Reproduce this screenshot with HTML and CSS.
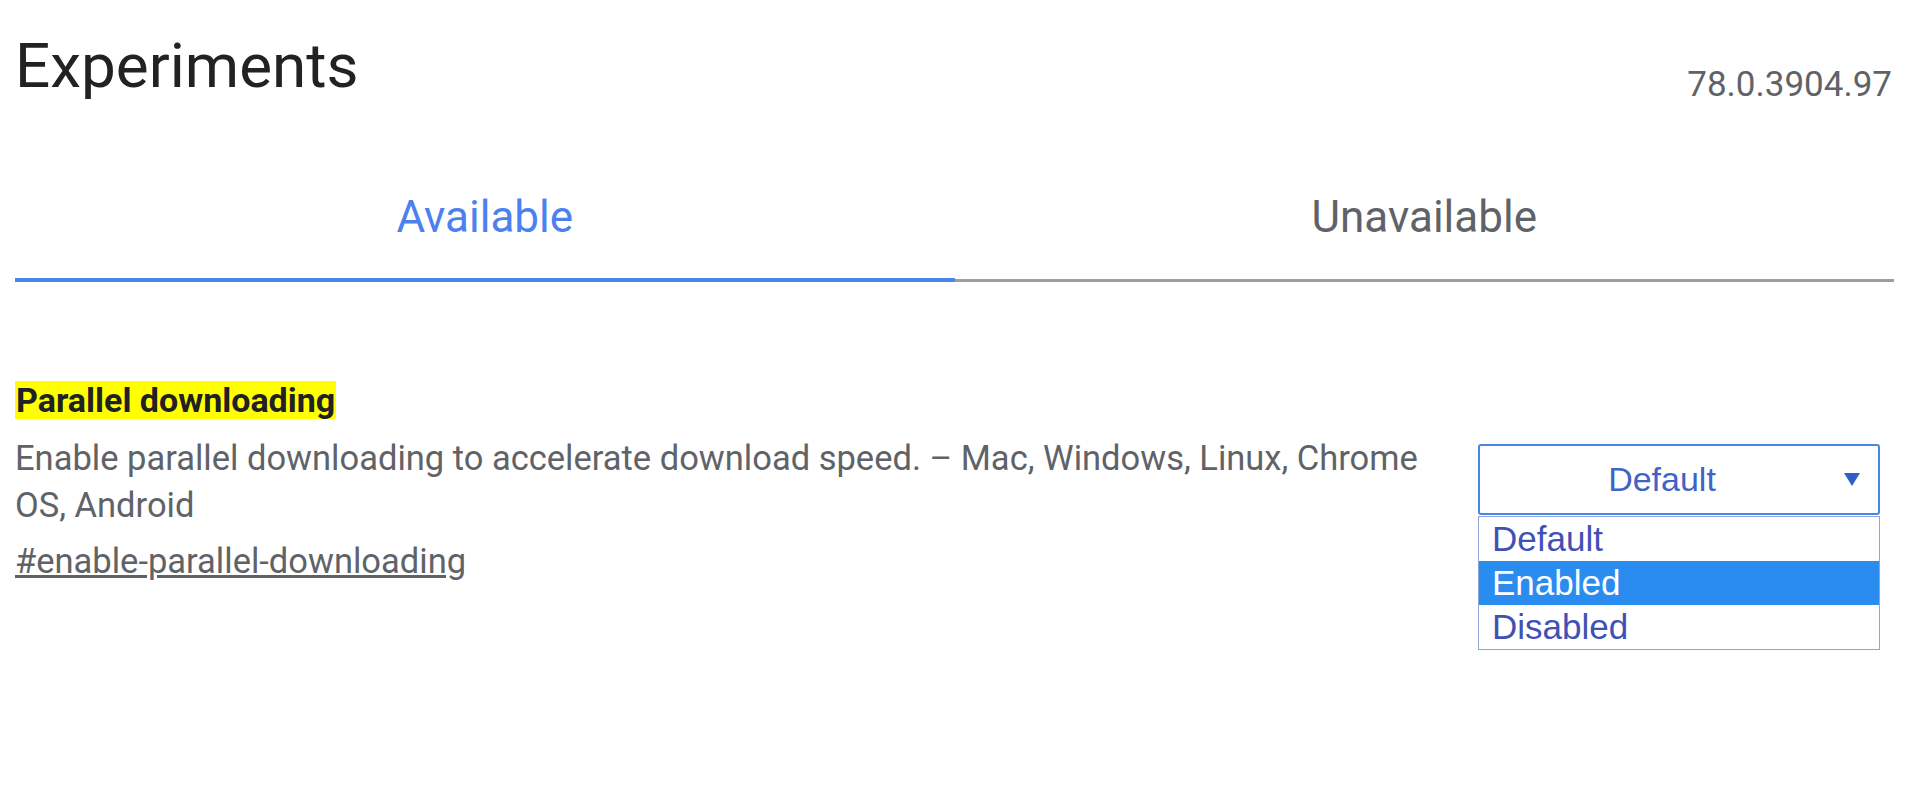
FILE: index.html
```html
<!DOCTYPE html>
<html lang="en">
<head>
    <meta charset="UTF-8">
    <title>Experiments</title>
    <link rel="stylesheet" href="styles.css">
</head>
<body>

    <div class="page">
        <!-- Header -->
        <div class="page-header">
            <h1>Experiments</h1>
            <span class="version">78.0.3904.97</span>
        </div>

        <!-- Tabs -->
        <div class="tabs">
            <div class="tab tab-active">Available</div>
            <div class="tab">Unavailable</div>
        </div>

        <!-- Flag entry -->
        <div class="flag">
            <div class="flag-info">
                <div class="flag-name"><span class="highlight">Parallel downloading</span></div>
                <p class="flag-desc">Enable parallel downloading to accelerate download speed. – Mac, Windows, Linux, Chrome OS, Android</p>
                <a class="flag-link" href="#enable-parallel-downloading">#enable-parallel-downloading</a>
            </div>

            <div class="flag-select">
                <div class="select-box">
                    <span class="select-value">Default</span>
                    <svg class="select-arrow" width="16" height="13" viewBox="0 0 16 13">
                        <polygon points="0,0 16,0 8,13" fill="#2f5fc8"/>
                    </svg>
                </div>
                <ul class="select-list">
                    <li>Default</li>
                    <li class="selected">Enabled</li>
                    <li>Disabled</li>
                </ul>
            </div>
        </div>
    </div>

</body>
</html>
```

FILE: styles.css
```css
body {
    font-family: 'Roboto', 'Liberation Sans', sans-serif;
    background-color: #fff;
    margin: 0;
    padding: 0;
    color: #202124;
}

.page {
    padding: 0 26px 0 15px;
}

.page-header {
    display: flex;
    justify-content: space-between;
    align-items: flex-start;
    padding-top: 29px;
}

.page-header h1 {
    margin: 0;
    font-size: 62px;
    line-height: 74px;
    font-weight: 400;
    color: #222;
}

.version {
    margin-top: 36px;
    font-size: 35px;
    line-height: 40px;
    color: #5f6368;
    padding-right: 2px;
}

/* Tabs */
.tabs {
    display: flex;
    align-items: flex-end;
    margin-top: 86px;
}

.tab {
    flex: 1;
    text-align: center;
    font-size: 44px;
    line-height: 52px;
    color: #5f6368;
    padding-bottom: 36px;
    border-bottom: 3px solid #9e9e9e;
}

.tab-active {
    color: #4c7fef;
    padding-bottom: 35px;
    border-bottom: 4px solid #4a86e8;
}

/* Flag entry */
.flag {
    display: flex;
    align-items: flex-start;
    margin-top: 99px;
}

.flag-info {
    flex: 1;
    margin-right: 30px;
}

.flag-name {
    font-size: 34px;
    font-weight: 700;
    line-height: 38px;
}

.highlight {
    display: inline-block;
    background-color: #ffff00;
    padding: 0 1px;
}

.flag-desc {
    margin: 16px 0 0;
    font-size: 34.5px;
    line-height: 47px;
    color: #5f6368;
}

.flag-link {
    display: inline-block;
    margin-top: 9px;
    font-size: 34.5px;
    line-height: 46px;
    color: #5f6368;
}

/* Select with open list */
.flag-select {
    width: 402px;
    margin: 63px 14px 0 0;
    font-family: 'Liberation Sans', Arial, sans-serif;
}

.select-box {
    display: flex;
    align-items: center;
    height: 67px;
    border: 2px solid #4a86e8;
    border-radius: 3px;
    color: #3f63c8;
    font-size: 34px;
}

.select-value {
    flex: 1;
    text-align: center;
}

.select-arrow {
    margin-right: 18px;
}

.select-list {
    list-style: none;
    margin: 1px 0 0;
    padding: 0;
    border: 1px solid #8fa4d8;
}

.select-list li {
    font-size: 35px;
    line-height: 44px;
    padding-left: 13px;
    color: #3f51b5;
}

.select-list li.selected {
    background-color: #2b8cf0;
    color: #fff;
}
```
